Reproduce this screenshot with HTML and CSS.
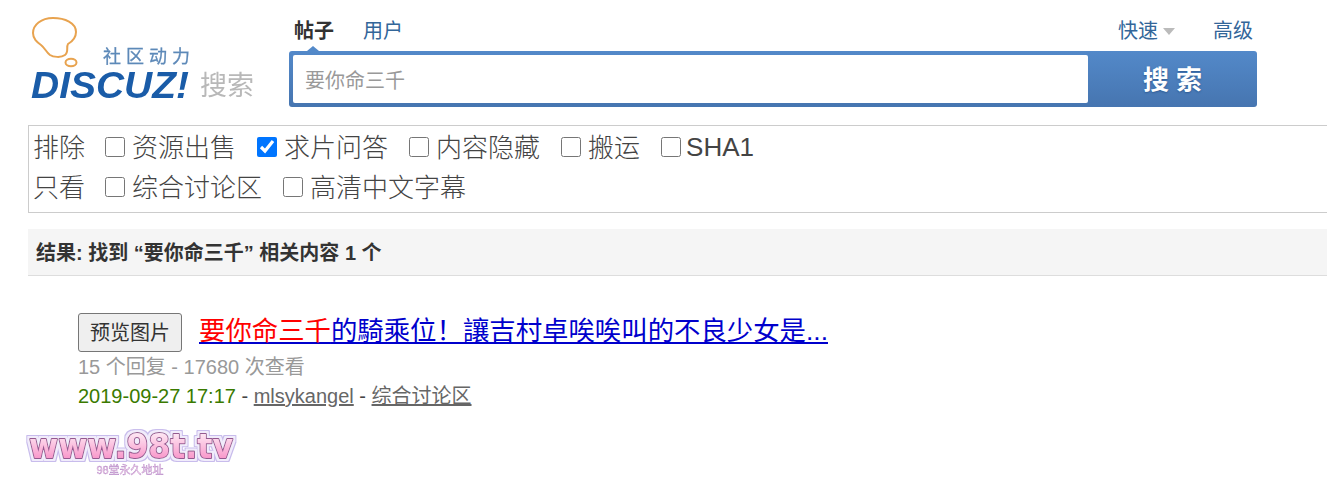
FILE: index.html
```html
<!DOCTYPE html>
<html lang="zh-CN">
<head>
    <meta charset="UTF-8">
    <meta name="viewport" content="width=device-width, initial-scale=1.0">
    <title>要你命三千 - 搜索</title>
    <link rel="stylesheet" href="styles.css">
</head>
<body>
    <header class="search-head">
        <a class="logo" href="#">
            <svg width="232" height="90" viewBox="0 0 232 90">
                <path d="M25 4C13 4 5 11 5 19c0 6 4 9 8 12 4 3 5 7 9 10 3 2 11 3 15 0 4-3 1-8 3-11 5-3 8-7 8-12C48 9 37 4 25 4z" fill="none" stroke="#e8a34f" stroke-width="2"/>
                <ellipse cx="43" cy="48.500" rx="5.500" ry="3.800" fill="none" stroke="#e8a34f" stroke-width="2"/>
                <text x="75" y="49" class="logo-slogan">社区动力</text>
                <text x="3" y="84" class="logo-name" textLength="158" lengthAdjust="spacingAndGlyphs">DISCUZ!</text>
                <text x="172" y="81" class="logo-search">搜索</text>
            </svg>
        </a>
        <div class="search-main">
            <nav class="search-tabs">
                <a class="tab tab-active" href="#">帖子</a>
                <a class="tab" href="#">用户</a>
                <span class="tabs-right">
                    <a class="tab" href="#">快速<i class="caret"></i></a>
                    <a class="tab" href="#">高级</a>
                </span>
            </nav>
            <form class="search-box">
                <input class="search-input" type="text" value="要你命三千">
                <button class="search-btn" type="button">搜 索</button>
            </form>
        </div>
    </header>

    <section class="filters">
        <div class="filter-row">
            <span class="filter-title">排除</span>
            <label class="filter-item"><input type="checkbox">资源出售</label>
            <label class="filter-item"><input type="checkbox" checked>求片问答</label>
            <label class="filter-item"><input type="checkbox">内容隐藏</label>
            <label class="filter-item"><input type="checkbox">搬运</label>
            <label class="filter-item filter-latin"><input type="checkbox">SHA1</label>
        </div>
        <div class="filter-row">
            <span class="filter-title">只看</span>
            <label class="filter-item"><input type="checkbox">综合讨论区</label>
            <label class="filter-item"><input type="checkbox">高清中文字幕</label>
        </div>
    </section>

    <h2 class="result-bar">结果: 找到 “要你命三千” 相关内容 1 个</h2>

    <ul class="results">
        <li class="result">
            <div class="result-title">
                <button class="preview-btn" type="button">预览图片</button>
                <a class="title-link" href="#"><strong class="hit">要你命三千</strong>的騎乘位！讓吉村卓唉唉叫的不良少女是...</a>
            </div>
            <p class="result-stats">15 个回复 - 17680 次查看</p>
            <p class="result-info"><span class="date">2019-09-27 17:17</span> - <a href="#">mlsykangel</a> - <a href="#">综合讨论区</a></p>
        </li>
    </ul>

    <svg class="watermark" width="226" height="62" viewBox="0 0 226 62">
        <defs>
            <linearGradient id="wmFill" x1="0" y1="0" x2="0" y2="1">
                <stop offset="0" stop-color="#fff"/>
                <stop offset="1" stop-color="#f77fbe"/>
            </linearGradient>
            <filter id="wmHalo" x="-10%" y="-40%" width="120%" height="180%">
                <feMorphology in="SourceAlpha" operator="dilate" radius="3" result="outer"/>
                <feFlood flood-color="#c8bcec"/>
                <feComposite in2="outer" operator="in" result="outerFill"/>
                <feMorphology in="SourceAlpha" operator="dilate" radius="1.500" result="inner"/>
                <feFlood flood-color="#f1ecfb"/>
                <feComposite in2="inner" operator="in" result="innerFill"/>
                <feMerge>
                    <feMergeNode in="outerFill"/>
                    <feMergeNode in="innerFill"/>
                    <feMergeNode in="SourceGraphic"/>
                </feMerge>
            </filter>
        </defs>
        <text x="113" y="36" class="wm-text" fill="url(#wmFill)" filter="url(#wmHalo)" textLength="204" lengthAdjust="spacingAndGlyphs">www.98t.tv</text>
        <text x="112" y="52" class="wm-sub">98堂永久地址</text>
    </svg>
</body>
</html>
```

FILE: styles.css
```css
html, body {
    overflow: hidden;
}

body {
    position: relative;
    margin: 0;
    height: 484px;
    font-family: "Liberation Sans", "Noto Sans CJK SC", sans-serif;
    color: #444;
    background-color: #fff;
}

a {
    color: inherit;
}

/* header */
.search-head {
    display: flex;
    padding: 14px 70px 0 28px;
}

.logo {
    display: block;
    width: 261px;
    height: 90px;
    flex-shrink: 0;
    filter: blur(0.5px);
}

.logo svg {
    overflow: visible;
}

.logo-slogan {
    font-size: 18px;
    letter-spacing: 5px;
    fill: #5d89b8;
    stroke: #5d89b8;
    stroke-width: 0.3px;
}

.logo-name {
    font-size: 37px;
    font-weight: bold;
    font-style: italic;
    fill: #1a5ca8;
}

.logo-search {
    font-size: 27px;
    fill: #b8b8b8;
}

.search-main {
    flex: 1;
}

.search-tabs {
    display: flex;
    gap: 29px;
    height: 37px;
    padding: 0 4px 0 5px;
    line-height: 35px;
}

.tab {
    font-size: 20px;
    color: #336699;
    text-decoration: none;
}

.tab-active {
    font-weight: bold;
    color: #333;
}

.tabs-right {
    display: flex;
    gap: 38px;
    margin-left: auto;
}

.caret {
    display: inline-block;
    margin-left: 5px;
    vertical-align: 3px;
    border-top: 7px solid #bbb;
    border-left: 6px solid transparent;
    border-right: 6px solid transparent;
}

.search-box {
    position: relative;
    display: flex;
    height: 56px;
    border-radius: 3px;
    background: linear-gradient(#5389c9, #4675b0);
}

.search-box::before {
    content: "";
    position: absolute;
    left: 18px;
    top: -5px;
    border-bottom: 5px solid #5389c9;
    border-left: 6px solid transparent;
    border-right: 6px solid transparent;
}

.search-input {
    flex: 1;
    min-width: 0;
    margin: 4px 0 4px 4px;
    padding: 0 12px;
    border: 0;
    border-radius: 2px;
    font-family: inherit;
    font-size: 20px;
    color: #999;
    background-color: #fff;
    outline: none;
}

.search-btn {
    width: 169px;
    padding: 0 0 4px;
    border: 0;
    background: none;
    font-family: inherit;
    font-size: 26px;
    font-weight: bold;
    color: #fff;
    text-shadow: 0 1px 2px #2d5a92;
}

/* filters */
.filters {
    margin: 18px -4px 0 28px;
    padding: 1px 4px 5px;
    border: 1px solid #ccc;
    font-size: 26px;
    font-weight: 300;
}

.filter-row {
    display: flex;
    height: 40px;
    align-items: center;
    gap: 21px;
}

.filter-title {
    width: 51px;
    white-space: nowrap;
    padding-bottom: 4px;
}

.filter-item {
    display: flex;
    align-items: center;
    gap: 7px;
    padding-bottom: 4px;
}

.filter-item input {
    width: 20px;
    height: 20px;
    margin: 4px 0 0;
}

.filter-latin {
    gap: 5px;
    padding-bottom: 0;
}

.filter-latin input {
    margin: 0;
}

/* results */
.result-bar {
    margin: 16px 0 0 28px;
    padding: 0 8px;
    height: 46px;
    line-height: 48px;
    font-size: 20px;
    color: #333;
    background-color: #f5f5f5;
    border-bottom: 1px solid #ddd;
}

.results {
    list-style: none;
    margin: 0;
    padding: 37px 0 0 78px;
}

.result-title {
    display: flex;
    align-items: center;
    gap: 17px;
}

.preview-btn {
    width: 104px;
    height: 39px;
    padding: 0 0 2px;
    border: 1px solid #767676;
    border-radius: 3px;
    font-family: inherit;
    font-size: 20px;
    color: #333;
    background-color: #efefef;
}

.title-link {
    font-size: 26.4px;
    color: #0000cc;
    margin-top: -8px;
}

.hit {
    font-weight: normal;
    color: #ff0000;
}

.result-stats,
.result-info {
    margin: 0;
    font-size: 20px;
    line-height: 29px;
}

.result-stats {
    margin-top: 1px;
    color: #999;
}

.date {
    color: #3a7a00;
}

.result-info {
    color: #444;
}

.result-info a {
    color: #666;
}

/* watermark over the page */
.watermark {
    position: absolute;
    left: 18px;
    top: 422px;
    filter: blur(0.4px);
}

.wm-text {
    font-family: "DejaVu Sans", sans-serif;
    font-size: 34px;
    font-weight: bold;
    text-anchor: middle;
    stroke: #94588f;
    stroke-width: 2px;
    stroke-linejoin: round;
    paint-order: stroke fill;
}

.wm-sub {
    font-size: 11px;
    text-anchor: middle;
    fill: #f9d3ea;
    stroke: #b58bc9;
    stroke-width: 0.4px;
}
```
